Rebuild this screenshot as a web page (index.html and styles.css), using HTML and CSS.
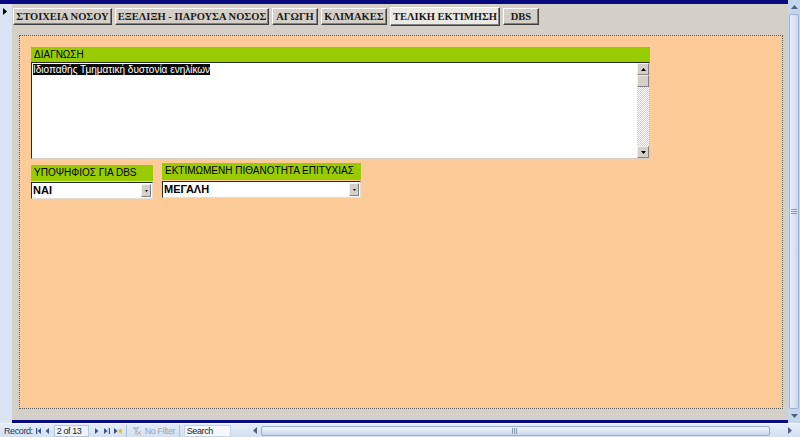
FILE: index.html
```html
<!DOCTYPE html>
<html>
<head>
<meta charset="utf-8">
<link rel="stylesheet" href="styles.css">
</head>
<body>
<div class="app">
  <div class="body-row">
    <div class="work">
      <div class="selector">
        <svg class="sel-arrow" width="5" height="7" viewBox="0 0 5 7"><path d="M0 0 L4 3.5 L0 7 Z" fill="#000"/></svg>
      </div>
      <div class="form">
        <div class="tabs">
          <div class="tab t1">ΣΤΟΙΧΕΙΑ ΝΟΣΟΥ</div>
          <div class="tab t2">ΕΞΕΛΙΞΗ - ΠΑΡΟΥΣΑ ΝΟΣΟΣ</div>
          <div class="tab t3">ΑΓΩΓΗ</div>
          <div class="tab t4">ΚΛΙΜΑΚΕΣ</div>
          <div class="tab t5 active">ΤΕΛΙΚΗ ΕΚΤΙΜΗΣΗ</div>
          <div class="tab t6">DBS</div>
        </div>
        <div class="panel">
          <div class="diag">
            <div class="label">ΔΙΑΓΝΩΣΗ</div>
            <div class="memo">
              <div class="memo-text"><span class="sel">Ιδιοπαθής Τμηματική δυστονία ενηλίκων</span></div>
              <div class="memo-scroll">
                <div class="sb-btn"><svg width="5" height="3" viewBox="0 0 5 3"><path d="M2.5 0 L5 3 L0 3 Z" fill="#000"/></svg></div>
                <div class="sb-thumb"></div>
                <div class="sb-track"></div>
                <div class="sb-btn"><svg width="5" height="3" viewBox="0 0 5 3"><path d="M0 0 L5 0 L2.5 3 Z" fill="#000"/></svg></div>
              </div>
            </div>
          </div>
          <div class="row">
            <div class="field f1">
              <div class="label">ΥΠΟΨΗΦΙΟΣ ΓΙΑ DBS</div>
              <div class="combo">
                <span class="combo-text">ΝΑΙ</span>
                <span class="combo-btn"><svg width="3" height="2" viewBox="0 0 3 2"><path d="M0 0 L3 0 L1.5 2 Z" fill="#000"/></svg></span>
              </div>
            </div>
            <div class="field f2">
              <div class="label">ΕΚΤΙΜΩΜΕΝΗ ΠΙΘΑΝΟΤΗΤΑ ΕΠΙΤΥΧΙΑΣ</div>
              <div class="combo">
                <span class="combo-text">ΜΕΓΑΛΗ</span>
                <span class="combo-btn"><svg width="3" height="2" viewBox="0 0 3 2"><path d="M0 0 L3 0 L1.5 2 Z" fill="#000"/></svg></span>
              </div>
            </div>
          </div>
        </div>
      </div>
    </div>
    <div class="vscroll">
      <div class="vs-btn"><svg width="7" height="4" viewBox="0 0 7 4"><path d="M3.5 0 L7 4 L0 4 Z" fill="#4d6185"/></svg></div>
      <div class="vs-thumb"><span class="grip"></span></div>
      <div class="vs-btn"><svg width="7" height="4" viewBox="0 0 7 4"><path d="M0 0 L7 0 L3.5 4 Z" fill="#4d6185"/></svg></div>
    </div>
  </div>
  <div class="status">
    <span class="st-label">Record:</span>
    <svg class="nav n-first" width="5" height="6" viewBox="0 0 5 6"><rect x="0" y="0" width="1.2" height="6" fill="#3b5488"/><path d="M5 0 L1.6 3 L5 6 Z" fill="#3b5488"/></svg>
    <svg class="nav n-prev" width="4" height="6" viewBox="0 0 4 6"><path d="M4 0 L0.6 3 L4 6 Z" fill="#3b5488"/></svg>
    <span class="rec-box">2 of 13</span>
    <svg class="nav n-next" width="4" height="6" viewBox="0 0 4 6"><path d="M0 0 L3.4 3 L0 6 Z" fill="#3b5488"/></svg>
    <svg class="nav n-last" width="6" height="6" viewBox="0 0 6 6"><path d="M0 0 L3.6 3 L0 6 Z" fill="#3b5488"/><rect x="4.8" y="0" width="1.2" height="6" fill="#3b5488"/></svg>
    <svg class="nav n-new" width="8" height="6" viewBox="0 0 8 6"><path d="M0 0 L3.6 3 L0 6 Z" fill="#3b5488"/><path d="M4.6 3 H8 M6.3 0.8 V5.2 M5 1.4 L7.6 4.6 M7.6 1.4 L5 4.6" stroke="#e8b400" stroke-width="0.9"/></svg>
    <span class="sep"></span>
    <svg class="funnel" width="9" height="8" viewBox="0 0 9 8"><path d="M0 0 H8 L5 3.5 V7.5 L3 6.5 V3.5 Z" fill="#b9c2cf"/><path d="M5 4 L9 8 M9 4 L5 8" stroke="#c9474a" stroke-width="0.8" opacity="0.55"/></svg>
    <span class="nofilter">No Filter</span>
    <span class="sep sep2"></span>
    <span class="search">Search</span>
    <div class="hscroll">
      <svg class="hs-arrow" width="4" height="7" viewBox="0 0 4 7"><path d="M4 0 L0 3.5 L4 7 Z" fill="#4d6185"/></svg>
      <div class="hs-thumb"><span class="hgrip"></span></div>
      <svg class="hs-arrow" width="4" height="7" viewBox="0 0 4 7"><path d="M0 0 L4 3.5 L0 7 Z" fill="#4d6185"/></svg>
    </div>
  </div>
</div>
</body>
</html>
```

FILE: styles.css
```css
* { box-sizing: border-box; }
html, body { margin: 0; padding: 0; }
body {
  width: 800px;
  height: 437px;
  overflow: hidden;
  background: #d4d0c8;
  font-family: "Liberation Sans", Arial, sans-serif;
}
.app { display: flex; flex-direction: column; height: 437px; }
.body-row { display: flex; height: 423px; }
.work {
  flex: 1;
  display: flex;
  border-top: 4px solid #0a0a80;
}
.selector {
  width: 12px;
  background: #dae4f2;
  padding: 4px 0 0 3px;
}
.sel-arrow { display: block; }
.form {
  flex: 1;
  display: flex;
  flex-direction: column;
  background: #d4d0c8;
  border-bottom: 3px solid #0a0a80;
  padding: 3px 0 0 1px;
}
.tabs {
  display: flex;
  align-items: center;
  gap: 3px;
  height: 19px;
}
.tab {
  height: 17px;
  line-height: 15px;
  text-align: center;
  font-family: "Liberation Serif", "Times New Roman", serif;
  font-weight: bold;
  font-size: 10.5px;
  color: #1a1a1a;
  background: #d4d0c8;
  border: 1px solid;
  border-color: #ffffff #404040 #404040 #ffffff;
  box-shadow: inset -1px -1px 0 #808080;
  white-space: nowrap;
}
.t1 { width: 99px; }
.t2 { width: 154px; }
.t3 { width: 46px; }
.t4 { width: 66px; }
.t5 { width: 110px; }
.t6 { width: 36px; }
.tab.active {
  height: 19px;
  line-height: 17px;
  background: #ebe9e4;
}
.panel {
  margin: 9px 5px 0 6px;
  height: 374px;
  background: #fccb98;
  border: 1px dotted #5a5a5a;
  padding: 11px 0 0 11px;
}
.diag { width: 619px; }
.label {
  background: #99cc00;
  height: 15px;
  line-height: 15px;
  padding-left: 3px;
  font-size: 10px;
  color: #000;
  white-space: nowrap;
}
.memo {
  display: flex;
  height: 97px;
  background: #fff;
  border-left: 1px solid #2a2a2a;
  border-top: 1px solid #2a2a2a;
  border-right: 1px solid #d4d0c8;
  border-bottom: 1px solid #d4d0c8;
}
.memo-text {
  flex: 1;
  padding: 1px 0 0 1px;
  font-size: 10px;
  line-height: 12px;
}
.sel { background: #0a0a0a; color: #fff; }
.memo-scroll {
  width: 12px;
  display: flex;
  flex-direction: column;
  background-color: #f2f1ee;
  background-image: repeating-conic-gradient(#d4d0c8 0 25%, #ffffff 0 50%);
  background-size: 2px 2px;
}
.sb-btn, .sb-thumb {
  height: 12px;
  background: #d4d0c8;
  border: 1px solid;
  border-color: #f4f3f0 #808080 #808080 #f4f3f0;
  display: flex;
  align-items: center;
  justify-content: center;
}
.sb-track { flex: 1; }
.row {
  display: flex;
  gap: 9px;
  margin-top: 4px;
}
.f1 { width: 122px; padding-top: 2px; }
.f2 { width: 199px; }
.f1 .label { height: 16px; line-height: 16px; }
.f2 .label { height: 17px; line-height: 16px; }
.combo {
  display: flex;
  height: 17px;
  margin-top: 1px;
  background: #fff;
  border: 1px solid;
  border-color: #2a2a2a #e0ddd6 #e0ddd6 #2a2a2a;
}
.combo-text {
  flex: 1;
  padding-left: 1px;
  font-weight: bold;
  font-size: 11px;
  line-height: 15px;
}
.combo-btn {
  width: 10px;
  margin: 1px 1px 1px 0;
  background: #d4d0c8;
  border: 1px solid;
  border-color: #f4f3f0 #808080 #808080 #f4f3f0;
  display: flex;
  align-items: center;
  justify-content: center;
}
.vscroll {
  width: 12px;
  display: flex;
  flex-direction: column;
  background: #c5d5ec;
  padding: 0 1px;
}
.vs-btn {
  height: 14px;
  display: flex;
  align-items: center;
  justify-content: center;
}
.vs-thumb {
  flex: 1;
  background: linear-gradient(to right, #e8eff9, #c9d8ee);
  border: 1px solid #9fb3d2;
  border-radius: 2px;
  display: flex;
  align-items: center;
  justify-content: center;
}
.grip {
  width: 6px;
  height: 6px;
  background: repeating-linear-gradient(to bottom, #8a9ab5 0 1px, transparent 1px 2px);
}
.status {
  flex: 1;
  display: flex;
  align-items: center;
  background: linear-gradient(to bottom, #e4edf8, #d3e0f1);
  border-top: 1px solid #f2f6fc;
  padding-left: 4px;
  font-size: 9px;
  letter-spacing: -0.4px;
  color: #1e395b;
}
.st-label { white-space: nowrap; margin-right: 3px; }
.nav { flex: none; }
.n-prev { margin-left: 4px; }
.rec-box {
  width: 35px;
  height: 12px;
  line-height: 10px;
  padding-left: 2px;
  margin: 0 6px 0 5px;
  background: #eef3fa;
  border: 1px solid #b6c8e1;
  color: #1e1e1e;
  white-space: nowrap;
}
.n-last { margin-left: 5px; }
.n-new { margin-left: 4px; }
.sep {
  width: 1px;
  height: 12px;
  background: #aebfd8;
  margin: 0 5px 0 4px;
}
.funnel { margin-right: 4px; flex: none; }
.nofilter { color: #9aa6b8; width: 30px; white-space: nowrap; }
.sep2 { margin: 0 4px 0 4px; }
.search {
  width: 47px;
  height: 12px;
  line-height: 10px;
  padding-left: 2px;
  background: #f4f7fb;
  border: 1px solid #c4d3e6;
  color: #1e1e1e;
}
.hscroll {
  margin-left: 18px;
  flex: 1;
  display: flex;
  align-items: center;
  height: 13px;
  padding: 0 8px 0 4px;
  gap: 4px;
}
.hs-thumb {
  flex: 1;
  height: 10px;
  margin-right: 14px;
  background: linear-gradient(to bottom, #f2f6fb, #c8d6ea);
  border: 1px solid #98aecd;
  border-radius: 2px;
  display: flex;
  align-items: center;
  justify-content: center;
}
.hgrip {
  width: 6px;
  height: 6px;
  background: repeating-linear-gradient(to right, #8a9ab5 0 1px, transparent 1px 2px);
}
.hs-arrow { flex: none; }
```
